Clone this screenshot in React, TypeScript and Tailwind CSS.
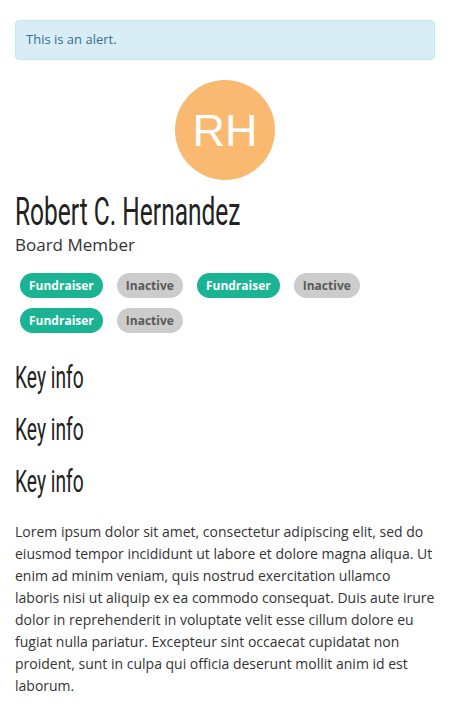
import React from "react";

const body = { fontFamily: "'Open Sans', 'Noto Sans', sans-serif" };
const head = { fontFamily: "Roboto, 'Liberation Sans', sans-serif" };

function Pill({ active, children }: { active?: boolean; children: React.ReactNode }) {
  return (
    <span
      className={
        active
          ? "inline-flex h-[25px] items-center rounded-full bg-[#1ab394] px-[9px] text-[12px] font-bold text-white"
          : "inline-flex h-[25px] items-center rounded-full bg-[#cccccc] px-[9px] text-[12px] font-bold text-[#5a5a5a]"
      }
    >
      {children}
    </span>
  );
}

export default function App() {
  return (
    <div className="min-h-[719px] bg-white px-[15px] pt-[20px] text-[#333]" style={body}>
      <div className="flex h-[40px] items-center rounded-[4px] border border-[#bce8f1] bg-[#d9edf7] px-[10px] text-[13px] text-[#31708f]">
        This is an alert.
      </div>
      <div
        className="mx-auto mt-[20px] flex h-[100px] w-[100px] items-center justify-center rounded-full bg-[#f9b970] text-[45px] leading-none text-white"
        style={{ fontFamily: "'Liberation Sans', Arial, sans-serif" }}
      >
        RH
      </div>
      <h1 className="mt-[10px] whitespace-nowrap text-[38px] leading-[44px] text-[#222]" style={head}>
        <span className="inline-block origin-left scale-x-[0.645]">Robert C. Hernandez</span>
      </h1>
      <div className="text-[17px] leading-[22px] text-[#333]">Board Member</div>
      <div className="mt-[17px] flex flex-wrap gap-x-[14px] gap-y-[10px] px-[5px]">
        <Pill active>Fundraiser</Pill>
        <Pill>Inactive</Pill>
        <Pill active>Fundraiser</Pill>
        <Pill>Inactive</Pill>
        <Pill active>Fundraiser</Pill>
        <Pill>Inactive</Pill>
      </div>
      <div className="mt-[29px] flex flex-col gap-[20px]">
        {[0, 1, 2].map((i) => (
          <h3 key={i} className="whitespace-nowrap text-[31px] leading-[32px] text-[#222]" style={head}>
            <span className="inline-block origin-left scale-x-[0.62]">Key info</span>
          </h3>
        ))}
      </div>
      <p className="mt-[23px] text-[14px] leading-[22px] text-[#333]">
        Lorem ipsum dolor sit amet, consectetur adipiscing elit, sed do eiusmod tempor incididunt ut labore et dolore magna aliqua. Ut enim ad minim veniam, quis nostrud exercitation ullamco laboris nisi ut aliquip ex ea commodo consequat. Duis aute irure dolor in reprehenderit in voluptate velit esse cillum dolore eu fugiat nulla pariatur. Excepteur sint occaecat cupidatat non proident, sunt in culpa qui officia deserunt mollit anim id est laborum.
      </p>
    </div>
  );
}
